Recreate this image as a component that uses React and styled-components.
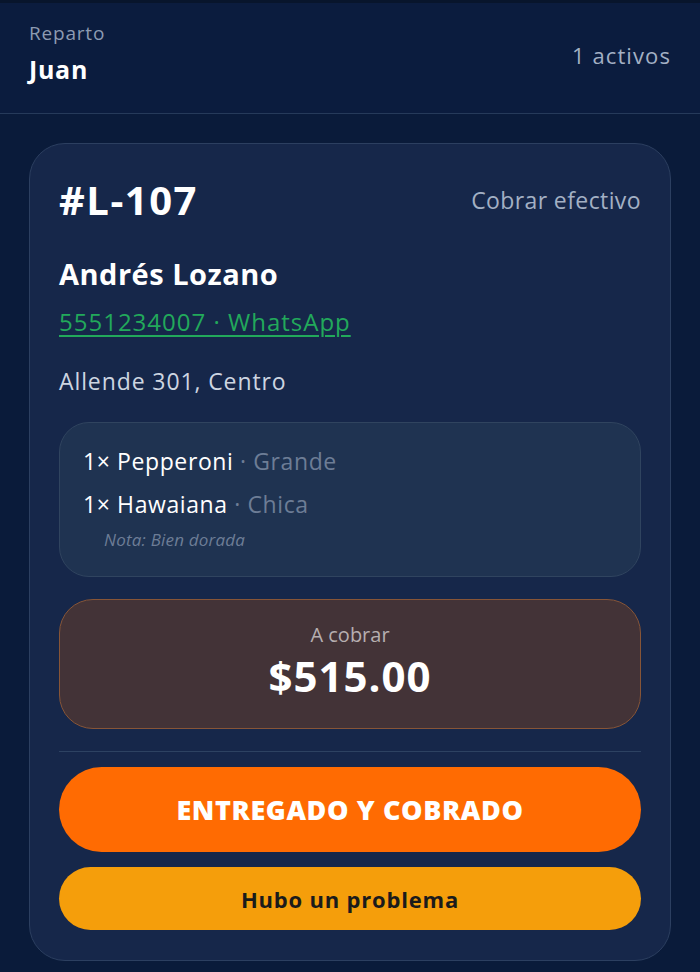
import React from "react";
import styled, { createGlobalStyle } from "styled-components";

const Global = createGlobalStyle`
  html, body { margin: 0; padding: 0; }
  body {
    background: #0a1b3a;
    font-family: "Open Sans", "Noto Sans", sans-serif;
    -webkit-font-smoothing: antialiased;
  }
`;

const Page = styled.div`
  min-height: 972px;
  background: #0a1b3a;
  border-top: 3px solid #08152c;
  box-sizing: border-box;
`;

const Header = styled.header`
  height: 111px;
  box-sizing: border-box;
  padding: 17px 29px 0 29px;
  display: flex;
  justify-content: space-between;
  align-items: flex-start;
  background: #0b1c3e;
  border-bottom: 1px solid #263a5a;
`;

const HeaderLeft = styled.div`
  display: flex;
  flex-direction: column;
`;

const Label = styled.div`
  color: #8d9bb2;
  font-size: 19px;
  letter-spacing: 0.8px;
  line-height: 26px;
`;

const Driver = styled.div`
  color: #ffffff;
  font-size: 25px;
  font-weight: 700;
  letter-spacing: 0.7px;
  line-height: 32px;
  margin-top: 7px;
`;

const Count = styled.div`
  color: #a3b0c4;
  font-size: 22px;
  letter-spacing: 1.1px;
  line-height: 28px;
  margin-top: 21px;
`;

const Main = styled.main`
  padding: 29px 29px 0 29px;
`;

const Card = styled.section`
  background: #16274a;
  border: 1px solid #2c3f60;
  border-radius: 36px;
  padding: 29px 29px 30px 29px;
  display: flex;
  flex-direction: column;
`;

const TopRow = styled.div`
  display: flex;
  justify-content: space-between;
  align-items: center;
`;

const OrderId = styled.div`
  color: #ffffff;
  font-size: 40px;
  font-weight: 700;
  letter-spacing: 1.5px;
  line-height: 54px;
`;

const Payment = styled.div`
  color: #a3b0c4;
  font-size: 23px;
  letter-spacing: 0.4px;
  line-height: 30px;
`;

const Name = styled.div`
  color: #ffffff;
  font-size: 29px;
  font-weight: 700;
  letter-spacing: 0.5px;
  line-height: 36px;
  margin-top: 29px;
`;

const Phone = styled.a`
  color: #22a95b;
  font-size: 24px;
  letter-spacing: 1px;
  line-height: 30px;
  text-decoration: underline;
  text-underline-offset: 4px;
  text-decoration-thickness: 1.5px;
  margin-top: 15px;
  align-self: flex-start;
`;

const Address = styled.div`
  color: #cdd5e1;
  font-size: 23px;
  letter-spacing: 0.9px;
  line-height: 30px;
  margin-top: 29px;
`;

const Items = styled.div`
  margin-top: 26px;
  background: #1f3351;
  border: 1px solid #30445f;
  border-radius: 30px;
  padding: 23px 23px;
  display: flex;
  flex-direction: column;
  gap: 13px;
`;

const Item = styled.div`
  color: #ffffff;
  font-size: 23px;
  letter-spacing: 0.6px;
  line-height: 30px;
`;

const Variant = styled.span`
  color: #6d7d96;
`;

const Note = styled.div`
  color: #6d7d96;
  font-size: 17px;
  letter-spacing: 0.2px;
  line-height: 26px;
  font-style: italic;
  padding-left: 21px;
  margin-top: -5px;
`;

const Amount = styled.div`
  margin-top: 22px;
  background: #433337;
  border: 1px solid #875537;
  border-radius: 34px;
  height: 130px;
  box-sizing: border-box;
  display: flex;
  flex-direction: column;
  align-items: center;
  justify-content: center;
`;

const AmountLabel = styled.div`
  color: #b6aeb0;
  font-size: 20px;
  line-height: 24px;
  margin-top: -2px;
`;

const AmountValue = styled.div`
  color: #ffffff;
  font-size: 42px;
  font-weight: 700;
  letter-spacing: 1px;
  line-height: 54px;
  margin-top: 2px;
`;

const Divider = styled.hr`
  border: none;
  border-top: 1px solid #2d4262;
  margin: 22px 0 15px 0;
`;

const Button = styled.button`
  border: none;
  border-radius: 999px;
  width: 100%;
  font-family: inherit;
  cursor: pointer;
  padding: 0;
  height: ${(p) => p.$h}px;
  background: ${(p) => p.$bg};
  color: ${(p) => p.$fg};
  font-size: ${(p) => p.$fs}px;
  font-weight: ${(p) => p.$fw};
  letter-spacing: ${(p) => p.$ls || 0}px;
  margin-top: ${(p) => p.$mt || 0}px;
`;

export default function App() {
  return (
    <>
      <Global />
      <Page>
        <Header>
          <HeaderLeft>
            <Label>Reparto</Label>
            <Driver>Juan</Driver>
          </HeaderLeft>
          <Count>1 activos</Count>
        </Header>
        <Main>
          <Card>
            <TopRow>
              <OrderId>#L-107</OrderId>
              <Payment>Cobrar efectivo</Payment>
            </TopRow>
            <Name>Andrés Lozano</Name>
            <Phone href="#">5551234007 · WhatsApp</Phone>
            <Address>Allende 301, Centro</Address>
            <Items>
              <Item>
                1× Pepperoni <Variant>· Grande</Variant>
              </Item>
              <Item>
                1× Hawaiana <Variant>· Chica</Variant>
              </Item>
              <Note>Nota: Bien dorada</Note>
            </Items>
            <Amount>
              <AmountLabel>A cobrar</AmountLabel>
              <AmountValue>$515.00</AmountValue>
            </Amount>
            <Divider />
            <Button $h={85} $bg="#ff6b02" $fg="#ffffff" $fs={27} $fw={800} $ls={0.6}>
              ENTREGADO Y COBRADO
            </Button>
            <Button $h={63} $bg="#f59e0b" $fg="#1b1b1b" $fs={22} $fw={700} $ls={0.8} $mt={15}>
              Hubo un problema
            </Button>
          </Card>
        </Main>
      </Page>
    </>
  );
}
